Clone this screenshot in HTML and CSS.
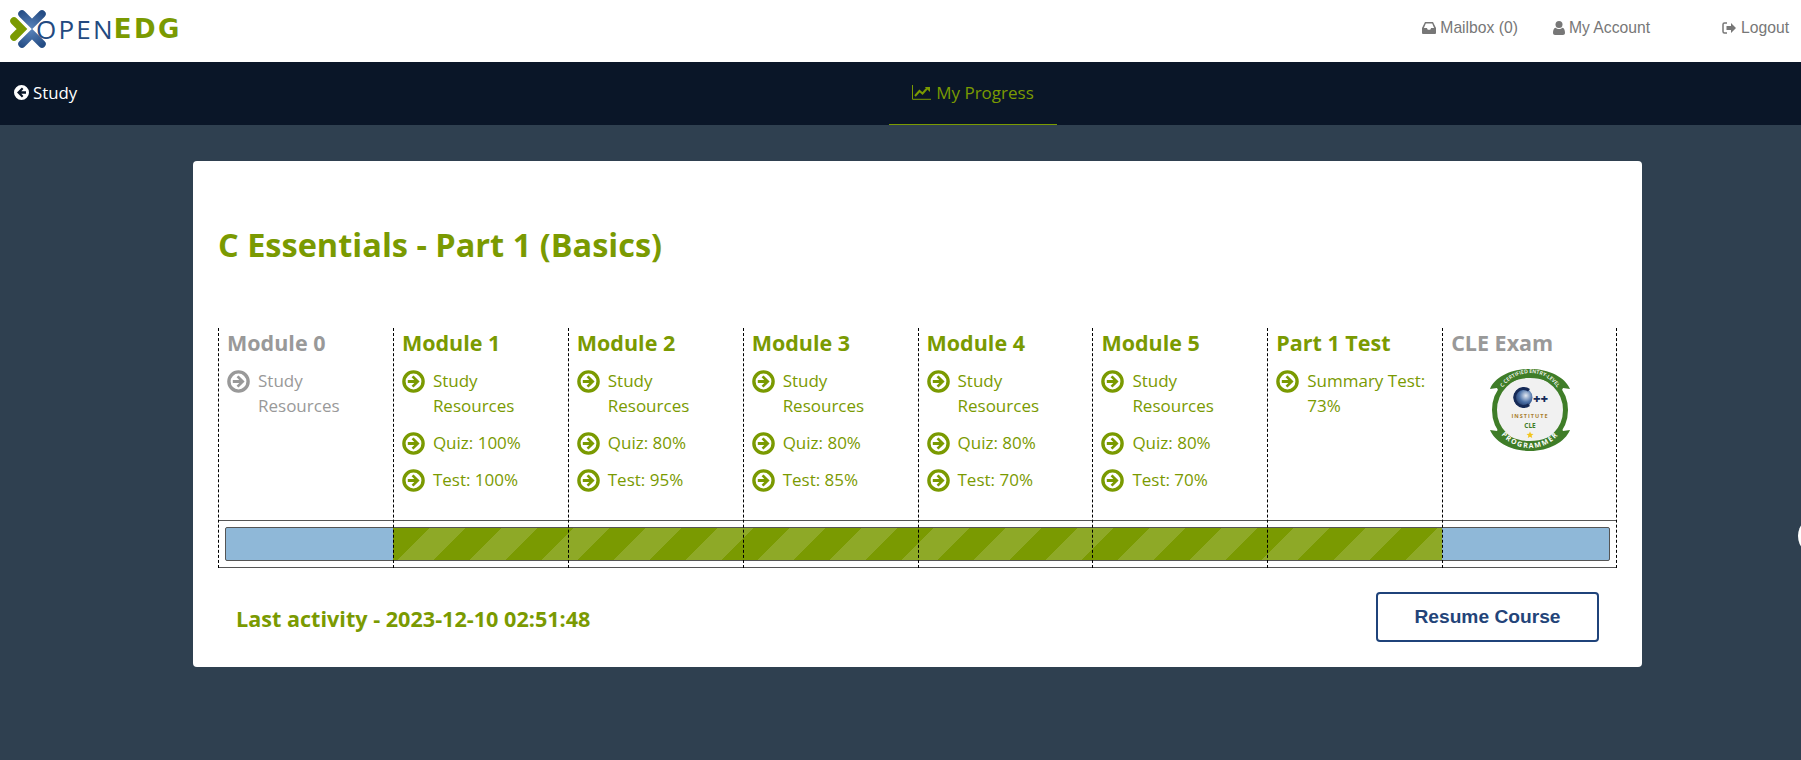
FILE: index.html
```html
<!DOCTYPE html>
<html lang="en">
<head>
  <meta charset="UTF-8">
  <meta name="viewport" content="width=device-width, initial-scale=1.0">
  <title>My Progress</title>
  <link rel="stylesheet" href="styles.css">
</head>
<body>
<svg class="sprites" width="0" height="0">
  <symbol id="go" viewBox="0 0 23 23">
    <circle cx="11.5" cy="11.5" r="9.6" fill="none" stroke="currentColor" stroke-width="3.4"/>
    <path d="M11.5 5.4l6.1 6.100-6.100 6.100-1.900-1.900 2.700-2.800H5.800v-2.800h6.500L9.600 7.300z" fill="currentColor"/>
  </symbol>
</svg>

<header class="topbar">
  <a class="logo" href="#">
    <svg class="logo-mark" width="36" height="40" viewBox="0 0 36 40">
      <defs>
        <radialGradient id="mark-blue" gradientUnits="userSpaceOnUse" cx="20" cy="20" r="20">
          <stop offset="0" stop-color="#5d86bd"/>
          <stop offset="1" stop-color="#254d85"/>
        </radialGradient>
      </defs>
      <path d="M12 5l10 10L32 5M12 35l10-10 10 10" fill="none" stroke="url(#mark-blue)" stroke-width="7.500" stroke-linecap="round"/>
      <path d="M4 12l8 8-8 8" fill="none" stroke="#7a9a01" stroke-width="7.500" stroke-linecap="round"/>
    </svg>
    <span class="logo-open">OPEN</span><span class="logo-edg">EDG</span>
  </a>
  <nav class="toplinks">
    <a href="#">
      <svg width="14" height="12" viewBox="0 0 14 12"><path d="M3 0h8l3 6v5a1 1 0 0 1-1 1H1a1 1 0 0 1-1-1V6zm.8 1.400L1.900 6h3l.9 1.800h2.400L9.100 6h3l-1.900-4.600z" fill="#777" fill-rule="evenodd"/></svg>
      Mailbox (0)
    </a>
    <a href="#">
      <svg width="12" height="14" viewBox="0 0 12 14"><circle cx="6" cy="3.500" r="3.500" fill="#777"/><path d="M0 12c0-3 .8-5 2.500-5.300C3.500 7.500 4.700 8 6 8s2.500-.5 3.500-1.300C11.200 7 12 9 12 12c0 1.300-.9 2-2 2H2c-1.100 0-2-.7-2-2z" fill="#777"/></svg>
      My Account
    </a>
    <a href="#">
      <svg width="14" height="12" viewBox="0 0 14 12"><path d="M5 1H2.500A1.500 1.500 0 0 0 1 2.500v7A1.500 1.500 0 0 0 2.500 11H5" fill="none" stroke="#777" stroke-width="1.500"/><path d="M9 1l5 5-5 5V8H4.500V4H9z" fill="#777"/></svg>
      Logout
    </a>
  </nav>
</header>

<nav class="subnav">
  <a class="back" href="#">
    <svg width="15" height="15" viewBox="0 0 14 14"><path d="M7 0a7 7 0 1 1 0 14A7 7 0 0 1 7 0zm.4 2.400L2.800 7l4.600 4.600 1.400-1.400-2-2.100h4.400V5.900H6.800l2-2.100z" fill="#fff" fill-rule="evenodd"/></svg>
    Study
  </a>
  <a class="tab" href="#">
    <svg width="19" height="15" viewBox="0 0 19 15"><path d="M.5 0v14.300H19" fill="none" stroke="currentColor"/><path d="M3 11l4.500-5 3 2.500L15 3.500" fill="none" stroke="currentColor" stroke-width="2"/><path d="M12.800 2H18v5z" fill="currentColor"/></svg>
    My Progress
  </a>
</nav>

<main class="card">
  <h1>C Essentials - Part 1 (Basics)</h1>

  <div class="board">
    <div class="columns">
      <section class="col off">
        <h2>Module 0</h2>
        <ul>
          <li><svg class="go"><use href="#go"/></svg><span>Study<br>Resources</span></li>
        </ul>
      </section>
      <section class="col">
        <h2>Module 1</h2>
        <ul>
          <li><svg class="go"><use href="#go"/></svg><span>Study<br>Resources</span></li>
          <li><svg class="go"><use href="#go"/></svg><span>Quiz: 100%</span></li>
          <li><svg class="go"><use href="#go"/></svg><span>Test: 100%</span></li>
        </ul>
      </section>
      <section class="col">
        <h2>Module 2</h2>
        <ul>
          <li><svg class="go"><use href="#go"/></svg><span>Study<br>Resources</span></li>
          <li><svg class="go"><use href="#go"/></svg><span>Quiz: 80%</span></li>
          <li><svg class="go"><use href="#go"/></svg><span>Test: 95%</span></li>
        </ul>
      </section>
      <section class="col">
        <h2>Module 3</h2>
        <ul>
          <li><svg class="go"><use href="#go"/></svg><span>Study<br>Resources</span></li>
          <li><svg class="go"><use href="#go"/></svg><span>Quiz: 80%</span></li>
          <li><svg class="go"><use href="#go"/></svg><span>Test: 85%</span></li>
        </ul>
      </section>
      <section class="col">
        <h2>Module 4</h2>
        <ul>
          <li><svg class="go"><use href="#go"/></svg><span>Study<br>Resources</span></li>
          <li><svg class="go"><use href="#go"/></svg><span>Quiz: 80%</span></li>
          <li><svg class="go"><use href="#go"/></svg><span>Test: 70%</span></li>
        </ul>
      </section>
      <section class="col">
        <h2>Module 5</h2>
        <ul>
          <li><svg class="go"><use href="#go"/></svg><span>Study<br>Resources</span></li>
          <li><svg class="go"><use href="#go"/></svg><span>Quiz: 80%</span></li>
          <li><svg class="go"><use href="#go"/></svg><span>Test: 70%</span></li>
        </ul>
      </section>
      <section class="col">
        <h2>Part 1 Test</h2>
        <ul>
          <li><svg class="go"><use href="#go"/></svg><span>Summary Test:<br>73%</span></li>
        </ul>
      </section>
      <section class="col off">
        <h2>CLE Exam</h2>
        <svg class="badge" width="80" height="84" viewBox="0 0 80 84">
          <defs>
            <path id="arc-top" d="M8 30A33 33 0 0 1 72 30"/>
            <path id="arc-bottom" d="M5 56A37.500 37.500 0 0 0 75 56"/>
            <radialGradient id="globe" cx="0.65" cy="0.4" r="0.7">
              <stop offset="0" stop-color="#e3e9f2"/>
              <stop offset="0.5" stop-color="#4b71a8"/>
              <stop offset="1" stop-color="#14264f"/>
            </radialGradient>
          </defs>
          <circle cx="40" cy="42" r="35.500" fill="#f1f1f1" stroke="#3f7d28" stroke-width="5"/>
          <path d="M0 21C5 9 21 1 40 1s35 8 40 20l-7-1-2 4C63 14 52 10 40 10S17 14 9 24l-2-4z" fill="#3f7d28"/>
          <path d="M0 62c5 12 21 21 40 21s35-9 40-21l-7 1-2-4C63 69 52 73 40 73S17 69 9 59l-2 4z" fill="#3f7d28"/>
          <text class="badge-top"><textPath href="#arc-top" startOffset="50%" text-anchor="middle">C CERTIFIED ENTRY-LEVEL</textPath></text>
          <text class="badge-bottom"><textPath href="#arc-bottom" startOffset="50%" text-anchor="middle">PROGRAMMER</textPath></text>
          <circle cx="33" cy="29.500" r="9.500" fill="url(#globe)"/>
          <path d="M40 21a10.500 10.500 0 1 0 0 17l-2-2.500a7.500 7.500 0 1 1 0-12z" fill="#152a57"/>
          <text class="badge-plus" x="43" y="35">++</text>
          <text class="badge-inst" x="40" y="49.500" text-anchor="middle">INSTITUTE</text>
          <text class="badge-cle" x="40" y="59.500" text-anchor="middle">CLE</text>
          <path d="M40 63.500l1 2.300 2.500.2-1.900 1.600.6 2.400-2.200-1.300-2.200 1.300.6-2.400-1.900-1.600 2.500-.2z" fill="#f2c51d"/>
        </svg>
      </section>
    </div>

    <div class="progress">
      <div class="bar">
        <div class="seg-todo seg-first"></div>
        <div class="seg-done"></div>
        <div class="seg-todo seg-last"></div>
      </div>
    </div>

    <div class="col-lines">
      <i></i><i></i><i></i><i></i><i></i><i></i><i></i><i></i>
    </div>
  </div>

  <div class="card-foot">
    <p class="last-activity">Last activity - 2023-12-10 02:51:48</p>
    <a class="resume" href="#">Resume Course</a>
  </div>
</main>

<div class="side-blob"></div>
</body>
</html>
```

FILE: styles.css
```css
html, body {
  margin: 0;
  height: 100%;
  overflow: hidden;
}
body {
  font-family: "Open Sans", sans-serif;
  background: #2f4050;
  color: #7a9a01;
}
a {
  text-decoration: none;
  color: inherit;
}
.sprites {
  position: absolute;
}

.topbar {
  height: 62px;
  background: #fff;
  display: flex;
  justify-content: space-between;
  align-items: flex-start;
}
.logo {
  display: flex;
  align-items: center;
  height: 58px;
  padding-left: 10px;
  font-size: 26px;
  line-height: 1;
}
.logo-open {
  color: #234a80;
  margin-left: -10px;
  letter-spacing: 2.200px;
}
.logo-edg {
  font-family: "DejaVu Sans", sans-serif;
  color: #7a9a01;
  font-weight: 700;
  margin-left: -1px;
  letter-spacing: 2.500px;
}
.toplinks {
  display: flex;
  font-family: "Liberation Sans", sans-serif;
  font-size: 15.700px;
  color: #777;
  padding: 19px 12px 0 0;
}
.toplinks a {
  display: flex;
  align-items: center;
  gap: 4px;
}
.toplinks a:nth-child(1) { margin-right: 35px; }
.toplinks a:nth-child(2) { margin-right: 72px; }
.toplinks a:nth-child(3) { gap: 5px; }

.subnav {
  height: 63px;
  background: #0a1628;
  display: flex;
  position: relative;
  justify-content: center;
}
.back {
  position: absolute;
  left: 14px;
  top: 0;
  height: 61px;
  display: flex;
  align-items: center;
  gap: 4px;
  color: #fff;
  font-size: 16.800px;
}
.tab {
  width: 168px;
  margin-left: 145px;
  display: flex;
  align-items: center;
  justify-content: center;
  gap: 5px;
  font-size: 17px;
  box-sizing: border-box;
  height: 63px;
  padding-bottom: 1px;
  border-bottom: 1px solid #7a9a01;
}

.card {
  width: 1449px;
  box-sizing: border-box;
  margin: 36px 0 0 193px;
  padding: 0 25px 25px 25px;
  background: #fff;
  border-radius: 4px;
}
h1 {
  margin: 0 0 63px;
  padding-top: 64px;
  font-size: 32.500px;
  line-height: 40px;
  font-weight: 700;
}
.board {
  position: relative;
}
.columns {
  display: grid;
  grid-template-columns: repeat(8, 1fr);
}
.col {
  padding: 0 0 28px 9px;
}
.col.off {
  color: #999;
}
h2 {
  margin: 0 0 10px;
  font-size: 21.500px;
  line-height: 30px;
  font-weight: 700;
}
ul {
  list-style: none;
  margin: 0;
  padding: 0;
  font-size: 17px;
  line-height: 25px;
}
li {
  display: flex;
  gap: 8px;
  margin-bottom: 12px;
}
li:last-child {
  margin-bottom: 0;
}
.go {
  width: 23px;
  height: 23px;
  flex: none;
  margin-top: 2px;
}
.badge {
  display: block;
  margin: 1px 0 0 39px;
}
.badge text {
  font-family: "Open Sans", sans-serif;
}
.badge .badge-top {
  font-size: 5.200px;
  font-weight: 600;
  fill: #fff;
}
.badge .badge-bottom {
  font-size: 7px;
  font-weight: 700;
  letter-spacing: 1.400px;
  fill: #fff;
}
.badge .badge-plus {
  font-size: 13px;
  font-weight: 800;
  fill: #152a57;
}
.badge .badge-inst {
  font-size: 5.500px;
  font-weight: 700;
  letter-spacing: 1px;
  fill: #a97f2e;
}
.badge .badge-cle {
  font-size: 6.500px;
  font-weight: 700;
  fill: #3f7d28;
}

.progress {
  border-top: 1px solid #555;
  border-bottom: 1px solid #555;
  padding: 6px 7px;
}
.bar {
  display: flex;
  height: 34px;
  box-sizing: border-box;
  border: 1px solid #555;
  border-radius: 2px;
  background: #8fb8d8;
}
.seg-first {
  width: 167px;
}
.seg-last {
  flex: 1;
}
.seg-done {
  width: 1049px;
  background-color: #7a9a01;
  background-image: linear-gradient(135deg, rgba(255,255,255,.15) 25%, transparent 25%, transparent 50%, rgba(255,255,255,.15) 50%, rgba(255,255,255,.15) 75%, transparent 75%, transparent);
  background-size: 72px 72px;
  background-position: 36px 0;
}
.col-lines {
  position: absolute;
  inset: 0;
  display: grid;
  grid-template-columns: repeat(8, 1fr);
  pointer-events: none;
}
.col-lines i {
  border-left: 1px dashed #000;
}
.col-lines i:last-child {
  border-right: 1px dashed #000;
}

.card-foot {
  display: flex;
  justify-content: space-between;
  align-items: center;
  margin-top: 24px;
  padding: 0 18px 0 18px;
}
.last-activity {
  margin: 0;
  padding-top: 2px;
  font-size: 21.600px;
  font-weight: 700;
}
.resume {
  width: 223px;
  height: 50px;
  box-sizing: border-box;
  border: 2px solid #1f437a;
  border-radius: 4px;
  display: flex;
  align-items: center;
  justify-content: center;
  font-family: "Liberation Sans", sans-serif;
  font-size: 19.200px;
  font-weight: 700;
  color: #234479;
}
.side-blob {
  position: fixed;
  left: 1798px;
  top: 516px;
  width: 40px;
  height: 40px;
  border-radius: 50%;
  background: #fff;
}
```
